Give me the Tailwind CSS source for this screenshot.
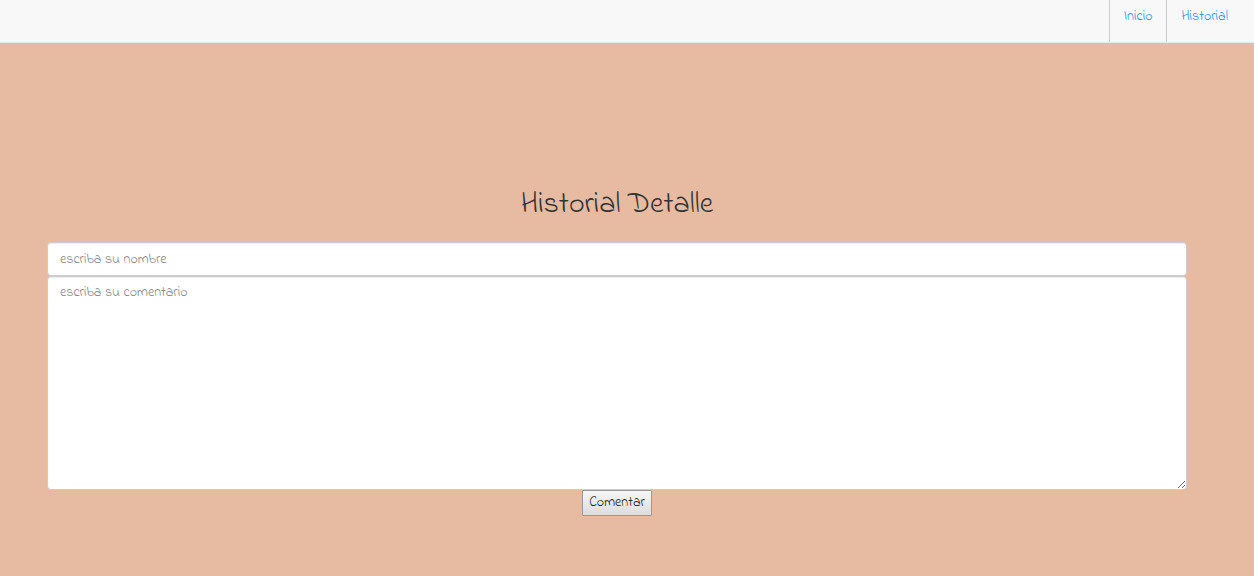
<!DOCTYPE html>
<html lang="es">
<head>
<meta charset="utf-8">
<meta name="viewport" content="width=device-width, initial-scale=1">
<title>Historial Detalle</title>
<script src="https://cdn.jsdelivr.net/npm/@tailwindcss/browser@4"></script>
</head>
<body class="min-h-screen bg-[#e7bba2] font-['Indie_Flower','Lato',sans-serif] text-sm font-light text-[#333333]">
<header class="border-b border-[#e7e7e7] bg-[#f8f8f8]">
  <nav class="flex justify-end pr-3">
    <a href="#inicio" class="h-[42px] border-l border-[#cccccc] px-3.5 pt-[7px] leading-5 text-[#1e96e8]">Inicio</a>
    <a href="#historial" class="h-[42px] border-l border-[#cccccc] px-3.5 pt-[7px] leading-5 text-[#1e96e8]">Historial</a>
  </nav>
</header>
<main class="pt-[146px] pr-[67px] pb-[60px] pl-[47px]">
  <h1 class="mb-5 text-center text-[30px] leading-[33px]">Historial Detalle</h1>
  <form class="flex flex-col items-center">
    <input type="text" aria-label="Nombre" placeholder="escriba su nombre" class="h-[34px] w-full rounded border border-[#cccccc] bg-white px-3 shadow-[inset_0_1px_1px_rgba(0,0,0,0.075)] placeholder:text-[#888888]">
    <textarea aria-label="Comentario" placeholder="escriba su comentario" rows="10" class="h-[214px] w-full resize-y rounded border border-[#cccccc] bg-white px-3 py-1.5 leading-5 shadow-[inset_0_1px_1px_rgba(0,0,0,0.075)] placeholder:text-[#888888]"></textarea>
    <button type="button" class="h-[26px] w-[70px] rounded-[1px] border border-[#999999] bg-linear-to-b from-[#f6f6f6] to-[#dddddd] text-center leading-5 text-[#222222]">Comentar</button>
  </form>
</main>
</body>
</html>
